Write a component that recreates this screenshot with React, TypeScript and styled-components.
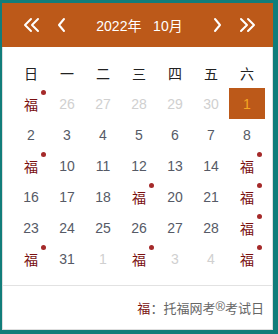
import styled, { createGlobalStyle } from "styled-components";

const GlobalStyle = createGlobalStyle`
  html, body {
    margin: 0;
    padding: 0;
    background: #117d7a;
    font-family: "Liberation Sans", Arial, "Noto Sans CJK SC", sans-serif;
  }
`;

const Panel = styled.div`
  margin: 3px 0 0 2px;
  width: 271px;
  height: 327px;
  box-sizing: border-box;
  background: #fff;
  border: 1px solid #dedede;
  border-top: none;
  display: flex;
  flex-direction: column;
`;

const Header = styled.div`
  height: 44px;
  margin: 0 -1px;
  background: #bc5919;
  display: flex;
  align-items: center;
  padding: 0 15px 0 19px;
  color: #fff;
`;

const NavButton = styled.button<{ $gap?: number }>`
  background: none;
  border: none;
  padding: 0;
  width: 22px;
  height: 22px;
  display: flex;
  align-items: center;
  justify-content: center;
  cursor: pointer;
  margin-right: ${({ $gap }) => $gap ?? 0}px;
`;

const Title = styled.div`
  flex: 1;
  text-align: center;
  font-size: 14px;
  white-space: pre;
`;

const Grid = styled.div`
  display: grid;
  grid-template-columns: repeat(7, 36px);
  grid-auto-rows: 31px;
  padding: 10px 0 0 10px;
`;

const Cell = styled.div<{ $kind?: string }>`
  position: relative;
  display: flex;
  align-items: center;
  justify-content: center;
  font-size: 14px;
  color: ${({ $kind }) =>
    $kind === "week"
      ? "#222"
      : $kind === "other"
        ? "#d0d0d0"
        : $kind === "today"
          ? "#f5a623"
          : $kind === "exam"
            ? "#7a1010"
            : "#565a66"};
  background: ${({ $kind }) => ($kind === "today" ? "#bc5919" : "transparent")};
`;

const Dot = styled.span`
  position: absolute;
  top: 2px;
  right: 3px;
  width: 5px;
  height: 5px;
  border-radius: 50%;
  background: #a52a2a;
`;

const Footer = styled.div`
  margin-top: auto;
  border-top: 1px solid #e2e2e2;
  height: 43px;
  display: flex;
  align-items: center;
  justify-content: flex-end;
  padding-right: 8px;
  font-size: 13px;
  color: #666;
`;

const Mark = styled.span`
  color: #7a1010;
`;

const Sup = styled.sup`
  font-size: 13px;
  line-height: 0;
  position: relative;
  top: -1px;
`;

const DoubleChevron = ({ dir }: { dir: "left" | "right" }) => (
  <svg width="20" height="16" viewBox="0 0 20 16" fill="none" stroke="#fff" strokeWidth="2" strokeLinecap="round" strokeLinejoin="round">
    {dir === "left" ? (
      <>
        <path d="M9 2 L3 8 L9 14" />
        <path d="M16 2 L10 8 L16 14" />
      </>
    ) : (
      <>
        <path d="M4 2 L10 8 L4 14" />
        <path d="M11 2 L17 8 L11 14" />
      </>
    )}
  </svg>
);

const Chevron = ({ dir }: { dir: "left" | "right" }) => (
  <svg width="12" height="16" viewBox="0 0 12 16" fill="none" stroke="#fff" strokeWidth="2" strokeLinecap="round" strokeLinejoin="round">
    {dir === "left" ? <path d="M8 2 L3 8 L8 14" /> : <path d="M4 2 L9 8 L4 14" />}
  </svg>
);

type Day = { label: string; kind?: string; dot?: boolean };

const weekDays = ["日", "一", "二", "三", "四", "五", "六"];

const exam = (): Day => ({ label: "福", kind: "exam", dot: true });

const days: Day[] = [
  exam(),
  { label: "26", kind: "other" },
  { label: "27", kind: "other" },
  { label: "28", kind: "other" },
  { label: "29", kind: "other" },
  { label: "30", kind: "other" },
  { label: "1", kind: "today" },
  { label: "2" }, { label: "3" }, { label: "4" }, { label: "5" }, { label: "6" }, { label: "7" }, { label: "8" },
  exam(), { label: "10" }, { label: "11" }, { label: "12" }, { label: "13" }, { label: "14" }, exam(),
  { label: "16" }, { label: "17" }, { label: "18" }, exam(), { label: "20" }, { label: "21" }, exam(),
  { label: "23" }, { label: "24" }, { label: "25" }, { label: "26" }, { label: "27" }, { label: "28" }, exam(),
  exam(),
  { label: "31" },
  { label: "1", kind: "other" },
  exam(),
  { label: "3", kind: "other" },
  { label: "4", kind: "other" },
  exam(),
];

export default function App() {
  return (
    <>
      <GlobalStyle />
      <Panel>
        <Header>
          <NavButton $gap={8}>
            <DoubleChevron dir="left" />
          </NavButton>
          <NavButton>
            <Chevron dir="left" />
          </NavButton>
          <Title>{"2022年   10月"}</Title>
          <NavButton $gap={8}>
            <Chevron dir="right" />
          </NavButton>
          <NavButton>
            <DoubleChevron dir="right" />
          </NavButton>
        </Header>
        <Grid>
          {weekDays.map((w) => (
            <Cell key={w} $kind="week">
              {w}
            </Cell>
          ))}
          {days.map((d, i) => (
            <Cell key={i} $kind={d.kind}>
              {d.label}
              {d.dot && <Dot />}
            </Cell>
          ))}
        </Grid>
        <Footer>
          <Mark>福</Mark>
          ：托福网考<Sup>®</Sup>考试日
        </Footer>
      </Panel>
    </>
  );
}
